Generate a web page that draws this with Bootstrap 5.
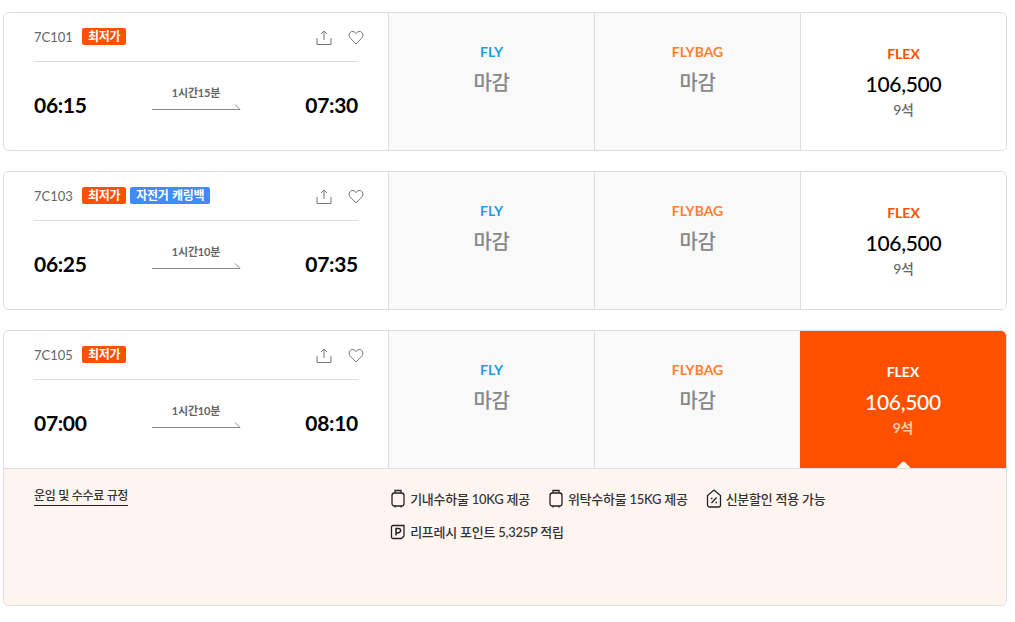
<!DOCTYPE html>
<html lang="ko">
<head>
<meta charset="utf-8">
<title>항공편</title>
<link rel="stylesheet" href="https://cdn.jsdelivr.net/npm/bootstrap@5.3.0/dist/css/bootstrap.min.css">
<style>
body{font-family:Lato,"Noto Sans CJK KR",sans-serif;background:#fff;color:#222;padding:12px 8px 0 3px;letter-spacing:-.3px}
.flight{border:1px solid #ddd;border-radius:6px;margin-bottom:20px;overflow:hidden;width:1004px}
.flight-row{height:137px}
.info{width:385px;padding:0 30px;border-right:1px solid #ddd}
.info-top{height:49px;border-bottom:1px solid #ddd;width:324px;padding-top:14px}
.fno{font-size:13px;color:#666;letter-spacing:0;width:48px;line-height:20px}
.tag{font-size:12px;font-weight:700;color:#fff;background:#ff5000;border-radius:2px;height:17px;line-height:17px;padding:0 6px;margin:1px 4px 0 0;word-spacing:1px}
.tag-blue{background:#3d8bfd}
.tool-set{margin-right:-6px;margin-top:2px;gap:16px}
.times{width:324px;padding-top:29px}
.clock{font-size:21px;font-weight:700;color:#000;line-height:28px;letter-spacing:-.3px}
.flight-time{margin-bottom:7px}
.dur{font-size:11px;font-weight:700;color:#666;line-height:14px;margin-top:-6px;margin-bottom:3px;letter-spacing:-.2px}
.fare{width:206px;flex:none;border-right:1px solid #ddd;background:#f9f9f9;padding-top:30px}
.fare.open{background:#fff;padding-top:32px;border-right:0;width:205px}
.fname{font-size:14px;font-weight:700;line-height:18px;letter-spacing:0}
.c-fly{color:#1a9ee2}.c-bag{color:#ff7f32}.c-flex{color:#ff5000}
.closed{font-size:20px;color:#888;line-height:24px;margin-top:9px;font-weight:500}
.price{font-size:21px;color:#000;line-height:28px;margin-top:7px;font-weight:500}
.seat{font-size:14px;color:#666;line-height:18px;margin-top:3px;font-weight:500}
.fare.open.sel{background:#ff5000;position:relative;margin-left:-1px;width:206px}
.sel .fname,.sel .price{color:#fff}
.sel .seat{color:#ffc9ad;font-weight:700}
.pointer{position:absolute;left:50%;bottom:0;margin-left:-7px;width:14px;height:7px;overflow:hidden}
.pointer::after{content:"";display:block;width:11px;height:11px;background:#fff5f0;border-radius:2px;transform:rotate(45deg);margin:2px 0 0 1.5px}
.detail{background:#fff5f0;border-top:1px solid #ddd;height:137px;padding:18px 0 0 30px}
.rule{font-size:12px;font-weight:500;color:#333;border-bottom:1px solid #222;line-height:17px;height:19px;text-decoration:none}
.perks{margin-left:262px;margin-top:2px;font-size:13px;font-weight:500;color:#333;line-height:16px;row-gap:16px;column-gap:18px;width:480px;letter-spacing:-.25px}
.perk{gap:4px}
</style>
</head>
<body>

<div class="flight bg-white">
 <div class="flight-row d-flex">
  <div class="info flex-shrink-0">
   <div class="info-top d-flex align-items-start">
    <span class="fno">7C101</span><span class="tag">최저가</span>
    <span class="tool-set d-flex ms-auto">
     <svg width="16" height="17" viewBox="0 0 16 17" fill="none" stroke="#777"><path d="M8 11V2M5 5l3-3 3 3M1 9v6.5h14V9"/></svg>
     <svg width="16" height="17" viewBox="0 0 16 17" fill="none" stroke="#777"><path d="M8 15 1.800 8.500C-.2 5 2.500 2 5 2.500 6.500 2.700 7.400 3.700 8 4.700 8.600 3.700 9.500 2.700 11 2.500 13.500 2 16.200 5 14.200 8.500z"/></svg>
    </span>
   </div>
   <div class="times d-flex justify-content-between align-items-center">
    <span class="clock">06:15</span>
    <span class="flight-time text-center">
     <div class="dur">1시간15분</div>
     <svg class="d-block" width="90" height="8" viewBox="0 0 90 8" fill="none" stroke="#888"><path d="M1 6.500h88L84 1.500"/></svg>
    </span>
    <span class="clock">07:30</span>
   </div>
  </div>
  <div class="fare text-center"><div class="fname c-fly">FLY</div><div class="closed">마감</div></div>
  <div class="fare text-center"><div class="fname c-bag">FLYBAG</div><div class="closed">마감</div></div>
  <div class="fare open text-center"><div class="fname c-flex">FLEX</div><div class="price">106,500</div><div class="seat">9석</div></div>
 </div>
</div>

<div class="flight bg-white">
 <div class="flight-row d-flex">
  <div class="info flex-shrink-0">
   <div class="info-top d-flex align-items-start">
    <span class="fno">7C103</span><span class="tag">최저가</span><span class="tag tag-blue">자전거 캐링백</span>
    <span class="tool-set d-flex ms-auto">
     <svg width="16" height="17" viewBox="0 0 16 17" fill="none" stroke="#777"><path d="M8 11V2M5 5l3-3 3 3M1 9v6.5h14V9"/></svg>
     <svg width="16" height="17" viewBox="0 0 16 17" fill="none" stroke="#777"><path d="M8 15 1.800 8.500C-.2 5 2.500 2 5 2.500 6.500 2.700 7.400 3.700 8 4.700 8.600 3.700 9.500 2.700 11 2.500 13.500 2 16.200 5 14.200 8.500z"/></svg>
    </span>
   </div>
   <div class="times d-flex justify-content-between align-items-center">
    <span class="clock">06:25</span>
    <span class="flight-time text-center">
     <div class="dur">1시간10분</div>
     <svg class="d-block" width="90" height="8" viewBox="0 0 90 8" fill="none" stroke="#888"><path d="M1 6.500h88L84 1.500"/></svg>
    </span>
    <span class="clock">07:35</span>
   </div>
  </div>
  <div class="fare text-center"><div class="fname c-fly">FLY</div><div class="closed">마감</div></div>
  <div class="fare text-center"><div class="fname c-bag">FLYBAG</div><div class="closed">마감</div></div>
  <div class="fare open text-center"><div class="fname c-flex">FLEX</div><div class="price">106,500</div><div class="seat">9석</div></div>
 </div>
</div>

<div class="flight bg-white">
 <div class="flight-row d-flex">
  <div class="info flex-shrink-0">
   <div class="info-top d-flex align-items-start">
    <span class="fno">7C105</span><span class="tag">최저가</span>
    <span class="tool-set d-flex ms-auto">
     <svg width="16" height="17" viewBox="0 0 16 17" fill="none" stroke="#777"><path d="M8 11V2M5 5l3-3 3 3M1 9v6.5h14V9"/></svg>
     <svg width="16" height="17" viewBox="0 0 16 17" fill="none" stroke="#777"><path d="M8 15 1.800 8.500C-.2 5 2.500 2 5 2.500 6.500 2.700 7.400 3.700 8 4.700 8.600 3.700 9.500 2.700 11 2.500 13.500 2 16.200 5 14.200 8.500z"/></svg>
    </span>
   </div>
   <div class="times d-flex justify-content-between align-items-center">
    <span class="clock">07:00</span>
    <span class="flight-time text-center">
     <div class="dur">1시간10분</div>
     <svg class="d-block" width="90" height="8" viewBox="0 0 90 8" fill="none" stroke="#888"><path d="M1 6.500h88L84 1.500"/></svg>
    </span>
    <span class="clock">08:10</span>
   </div>
  </div>
  <div class="fare text-center"><div class="fname c-fly">FLY</div><div class="closed">마감</div></div>
  <div class="fare text-center"><div class="fname c-bag">FLYBAG</div><div class="closed">마감</div></div>
  <div class="fare open sel text-center"><div class="fname">FLEX</div><div class="price">106,500</div><div class="seat">9석</div><span class="pointer"></span></div>
 </div>
 <div class="detail d-flex align-items-start">
  <a class="rule" href="#">운임 및 수수료 규정</a>
  <div class="perks d-flex flex-wrap">
   <span class="perk d-flex align-items-center">
    <svg width="16" height="19" viewBox="0 0 16 19" fill="none" stroke="#222" stroke-width="1.300"><rect x="2" y="4" width="12" height="13" rx="2.500"/><path d="M5 4V1.500h6V4M5 17v1.500M11 17v1.500"/></svg>
    기내수하물 10KG 제공</span>
   <span class="perk d-flex align-items-center">
    <svg width="16" height="19" viewBox="0 0 16 19" fill="none" stroke="#222" stroke-width="1.300"><rect x="2" y="4" width="12" height="13" rx="2.500"/><path d="M5 4V1.500h6V4M5 17v1.500M11 17v1.500"/></svg>
    위탁수하물 15KG 제공</span>
   <span class="perk d-flex align-items-center">
    <svg width="16" height="19" viewBox="0 0 16 19" fill="none" stroke="#222" stroke-width="1.300"><path d="M8 1 14.500 6.500V16a2 2 0 0 1-2 2h-9a2 2 0 0 1-2-2V6.500z"/><path d="M5.500 14 10.500 8.500M5 9.500h1.500M9.500 13.500H11"/></svg>
    신분할인 적용 가능</span>
   <span class="perk d-flex align-items-center w-100">
    <svg width="16" height="16" viewBox="0 0 16 16" fill="none" stroke="#222" stroke-width="1.300"><path d="M3 1.500h11V12l-2.500 2.500H3A1.500 1.500 0 0 1 1.500 13V3A1.500 1.500 0 0 1 3 1.500z"/><path d="M6 11.500V4.500h2.500a2 2 0 0 1 0 4.200H6" stroke-width="1.500"/></svg>
    리프레시 포인트 5,325P 적립</span>
  </div>
 </div>
</div>

</body>
</html>
